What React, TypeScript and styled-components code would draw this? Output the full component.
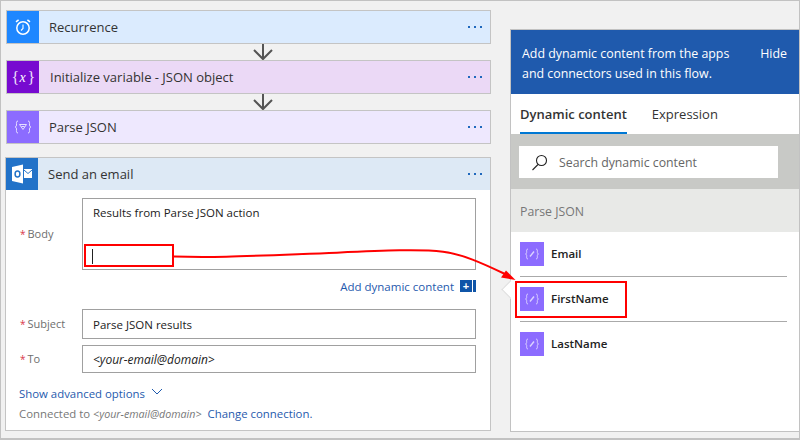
import styled, { createGlobalStyle } from 'styled-components'

const GlobalStyle = createGlobalStyle`
  html, body {
    margin: 0;
    padding: 0;
    background: #f1f1f1;
  }
  * {
    box-sizing: border-box;
  }
`

const fields = ['Email', 'FirstName', 'LastName']

export default function App() {
  return (
    <Page>
      <GlobalStyle />
      <Flow>
        <StepCard $bg="#dbebfe">
          <StepIcon $bg="#1e87ff">
            <ClockIcon />
          </StepIcon>
          <StepTitle>Recurrence</StepTitle>
          <MoreDots />
        </StepCard>
        <Connector>
          <DownArrow />
        </Connector>
        <StepCard $bg="#ebd9f6">
          <StepIcon $bg="#770bd0">
            <VarIcon />
          </StepIcon>
          <StepTitle $shift={1}>Initialize variable - JSON object</StepTitle>
          <MoreDots />
        </StepCard>
        <Connector>
          <DownArrow />
        </Connector>
        <StepCard $bg="#eee8fe">
          <StepIcon $bg="#8c6cff">
            <ParseIcon />
          </StepIcon>
          <StepTitle>Parse JSON</StepTitle>
          <MoreDots />
        </StepCard>
        <EmailCard>
          <EmailHeader>
            <StepIcon $bg="#2272c8">
              <OutlookIcon />
            </StepIcon>
            <StepTitle>Send an email</StepTitle>
            <MoreDots />
          </EmailHeader>
          <EmailBody>
            <FieldRow>
              <FieldLabel $top={28}>
                <Star>*</Star>Body
              </FieldLabel>
              <BodyBox>
                Results from Parse JSON action
                <Caret />
                <RedBox $left={1} $top={45} $width={90} $height={23} />
              </BodyBox>
            </FieldRow>
            <AddRow>
              <AddLink>Add dynamic content</AddLink>
              <PlusButton>+</PlusButton>
              <PlusBar />
            </AddRow>
            <FieldRow>
              <FieldLabel $top={7}>
                <Star>*</Star>Subject
              </FieldLabel>
              <InputBox $height={30}>Parse JSON results</InputBox>
            </FieldRow>
            <FieldRow $gap={6}>
              <FieldLabel $top={6}>
                <Star>*</Star>To
              </FieldLabel>
              <InputBox $height={28} $italic>
                {'<your-email@domain>'}
              </InputBox>
            </FieldRow>
            <AdvancedRow>
              Show advanced options
              <Chevron />
            </AdvancedRow>
            <ConnectedRow>
              Connected to <SmallItalic>{'<your-email@domain>'}</SmallItalic>
              <ChangeLink>Change connection.</ChangeLink>
            </ConnectedRow>
          </EmailBody>
        </EmailCard>
      </Flow>
      <Panel>
        <Notch />
        <PanelHeader>
          <HeaderText>
            Add dynamic content from the apps and connectors used in this flow.
          </HeaderText>
          <HideLink>Hide</HideLink>
        </PanelHeader>
        <Tabs>
          <Tab $active>Dynamic content</Tab>
          <Tab>Expression</Tab>
        </Tabs>
        <SearchBand>
          <SearchBox>
            <SearchIcon />
            Search dynamic content
          </SearchBox>
        </SearchBand>
        <GroupTitle>Parse JSON</GroupTitle>
        <FieldList>
          {fields.map((name) => (
            <FieldItem key={name}>
              <TokenIcon>
                <TokenGlyph />
              </TokenIcon>
              <FieldName>{name}</FieldName>
              {name === 'FirstName' && (
                <RedBox $left={-5} $top={4} $width={112} $height={37} />
              )}
            </FieldItem>
          ))}
        </FieldList>
      </Panel>
      <CalloutArrow />
    </Page>
  )
}

const MoreDots = () => (
  <Dots>
    <Dot />
    <Dot />
    <Dot />
  </Dots>
)

const DownArrow = () => (
  <svg width="22" height="17" viewBox="0 0 22 17" fill="none" stroke="#555" strokeWidth="2">
    <path d="M11 0v15M2 6l9 9 9-9" />
  </svg>
)

const ClockIcon = () => (
  <svg width="18" height="18" viewBox="0 0 18 18" fill="none" stroke="#fff">
    <circle cx="9" cy="10" r="6.200" strokeWidth="1.500" />
    <path d="M9 6.500V10.500L7 12.500" strokeWidth="1.100" />
    <path d="M2 3.800L4.600 1.800M16 3.800L13.400 1.800" strokeWidth="1.500" />
  </svg>
)

const VarIcon = () => (
  <svg width="26" height="24" viewBox="0 0 26 24">
    <text x="1.500" y="17.500" fill="#eee2fa" fontFamily="'Liberation Serif', serif" fontSize="16">
      {'{'}
    </text>
    <text x="9.500" y="16.500" fill="#fff" fontFamily="'Liberation Serif', serif" fontStyle="italic" fontSize="14">
      x
    </text>
    <text x="17.500" y="17.500" fill="#eee2fa" fontFamily="'Liberation Serif', serif" fontSize="16">
      {'}'}
    </text>
  </svg>
)

const ParseIcon = () => (
  <svg width="24" height="24" viewBox="0 0 24 24" fill="none" stroke="#e6dfff" strokeWidth="1">
    <path d="M7 6c-2 0-1.500 2-1.500 4 0 1.500-1 2-1.500 2 .5 0 1.500.5 1.500 2 0 2-.5 4 1.500 4" />
    <path d="M17 6c2 0 1.500 2 1.500 4 0 1.500 1 2 1.500 2-.5 0-1.500.5-1.500 2 0 2 .5 4-1.500 4" />
    <path d="M8.500 9.500h7l-3.500 5z" />
    <path d="M10.500 11.500h3" />
  </svg>
)

const OutlookIcon = () => (
  <svg width="22" height="22" viewBox="0 0 22 22">
    <path d="M1 4l11-2.500v19L1 18z" fill="#fff" />
    <ellipse cx="6.500" cy="11" rx="2.400" ry="3" fill="none" stroke="#2272c8" strokeWidth="1.500" />
    <path d="M13 6h8v9h-8z" fill="#fff" />
    <path d="M13 7l4 3.500L21 7" fill="none" stroke="#2272c8" strokeWidth="1" />
  </svg>
)

const TokenGlyph = () => (
  <svg width="24" height="24" viewBox="0 0 24 24" fill="none" stroke="#dcd3ff" strokeWidth="0.9">
    <path d="M8 7c-1.800 0-1.300 1.800-1.300 3.300 0 1.200-.7 1.700-1.200 1.700.5 0 1.200.5 1.200 1.700 0 1.500-.5 3.300 1.300 3.300" />
    <path d="M16 7c1.800 0 1.300 1.800 1.300 3.300 0 1.200.7 1.700 1.200 1.700-.5 0-1.200.5-1.200 1.700 0 1.500.5 3.300-1.300 3.300" />
    <path d="M10 14.500l4-5" strokeWidth="1.400" />
  </svg>
)

const SearchIcon = () => (
  <SearchSvg width="17" height="17" viewBox="0 0 17 17" fill="none" stroke="#222" strokeWidth="1.100">
    <circle cx="10.500" cy="6.500" r="5" />
    <path d="M7 10.500L1.500 16" />
  </SearchSvg>
)

const Chevron = () => (
  <ChevronSvg width="12" height="8" viewBox="0 0 12 8" fill="none" stroke="#1f5aad" strokeWidth="1">
    <path d="M1 1l5 5 5-5" />
  </ChevronSvg>
)

const CalloutArrow = () => (
  <ArrowOverlay width="800" height="440" viewBox="0 0 800 440" fill="none">
    <path
      d="M174 256.500C215 258 250 256 337 252.700C385 250.500 420 249 443 251.700C462 254 482 263 505 274"
      stroke="#f00"
      strokeWidth="2"
    />
    <path d="M515.500 280L501 277.500L506 270.500z" fill="#f00" />
  </ArrowOverlay>
)

const font = `'Open Sans', 'Liberation Sans', sans-serif`

const Page = styled.div`
  position: relative;
  display: flex;
  align-items: flex-start;
  width: 800px;
  height: 440px;
  overflow: hidden;
  background: #f1f1f1;
  border: 1px solid #c2c2c2;
  border-bottom-width: 2px;
  font-family: ${font};
  color: #333;
`

const Flow = styled.div`
  display: flex;
  flex-direction: column;
  flex: none;
  width: 486px;
  margin: 9px 0 0 4px;
`

const StepCard = styled.div<{ $bg: string }>`
  display: flex;
  align-items: center;
  height: 34px;
  margin-left: 1px;
  background: ${(p) => p.$bg};
  border: 1px solid #c4c4c4;
`

const StepIcon = styled.div<{ $bg: string }>`
  display: flex;
  align-items: center;
  justify-content: center;
  flex: none;
  width: 32px;
  height: 100%;
  background: ${(p) => p.$bg};
`

const StepTitle = styled.div<{ $shift?: number }>`
  flex: 1;
  padding-left: ${(p) => 10 + (p.$shift ?? 0)}px;
  font-size: 13px;
  color: #333;
`

const Dots = styled.div`
  display: flex;
  flex: none;
  gap: 4px;
  margin-right: 8px;
`

const Dot = styled.span`
  width: 2px;
  height: 2px;
  background: #1f68bd;
`

const Connector = styled.div`
  display: flex;
  justify-content: center;
  height: 16px;
  padding-left: 30px;
  overflow: visible;
`

const EmailCard = styled.div`
  display: flex;
  flex-direction: column;
  height: 274px;
  margin-top: 13px;
  background: #fff;
  border: 1px solid #c4c4c4;
`

const EmailHeader = styled.div`
  display: flex;
  align-items: center;
  flex: none;
  height: 32px;
  background: #dde9f5;
`

const EmailBody = styled.div`
  display: flex;
  flex-direction: column;
  padding: 8px 14px 0 12px;
`

const FieldRow = styled.div<{ $gap?: number }>`
  display: flex;
  margin-top: ${(p) => p.$gap ?? 0}px;
`

const FieldLabel = styled.div<{ $top: number }>`
  width: 64px;
  flex: none;
  padding-top: ${(p) => p.$top}px;
  padding-left: 2px;
  font-size: 11px;
  color: #6e6e6e;
`

const Star = styled.span`
  margin-right: 2px;
  font-size: 10px;
  color: #d9364a;
`

const BodyBox = styled.div`
  position: relative;
  flex: 1;
  height: 72px;
  padding: 6px 10px;
  border: 1px solid #a0a0a0;
  font-size: 11.500px;
  color: #222;
`

const Caret = styled.div`
  position: absolute;
  left: 9px;
  top: 50px;
  width: 1px;
  height: 15px;
  background: #222;
`

const RedBox = styled.div<{ $left: number; $top: number; $width: number; $height: number }>`
  position: absolute;
  left: ${(p) => p.$left}px;
  top: ${(p) => p.$top}px;
  width: ${(p) => p.$width}px;
  height: ${(p) => p.$height}px;
  border: 2px solid #f00;
`

const AddRow = styled.div`
  display: flex;
  align-items: center;
  justify-content: flex-end;
  height: 39px;
  padding-bottom: 7px;
`

const AddLink = styled.span`
  margin-right: 6px;
  font-size: 11.500px;
  color: #1f5aad;
`

const PlusButton = styled.span`
  display: flex;
  align-items: center;
  justify-content: center;
  width: 12px;
  height: 12px;
  background: #0f55a8;
  font-family: 'Liberation Sans', sans-serif;
  font-size: 11px;
  font-weight: 700;
  color: #fff;
`

const PlusBar = styled.span`
  width: 3px;
  height: 12px;
  margin-left: 1px;
  background: #0f55a8;
`

const InputBox = styled.div<{ $height: number; $italic?: boolean }>`
  display: flex;
  align-items: center;
  flex: 1;
  height: ${(p) => p.$height}px;
  padding-left: 10px;
  border: 1px solid #a0a0a0;
  font-size: ${(p) => (p.$italic ? 12 : 11.5)}px;
  font-style: ${(p) => (p.$italic ? 'italic' : 'normal')};
  color: #222;
`

const AdvancedRow = styled.div`
  display: flex;
  align-items: center;
  margin-top: 13px;
  padding-left: 1px;
  font-size: 11.400px;
  color: #1f5aad;
`

const ChevronSvg = styled.svg`
  margin-left: 6px;
  margin-top: -3px;
`

const ConnectedRow = styled.div`
  margin-top: 5px;
  padding-left: 1px;
  font-size: 11.400px;
  color: #777;
`

const SmallItalic = styled.span`
  font-size: 10.700px;
  font-style: italic;
`

const ChangeLink = styled.span`
  margin-left: 6px;
  color: #1f5aad;
`

const Panel = styled.div`
  position: relative;
  display: flex;
  flex-direction: column;
  flex: none;
  width: 290px;
  height: 403px;
  margin: 28px 0 0 19px;
  background: #fff;
  border: 1px solid #c2c2c2;
  border-right: none;
`

const Notch = styled.div`
  position: absolute;
  left: -7px;
  top: 253px;
  width: 13px;
  height: 13px;
  background: #fff;
  border-left: 1px solid #ddd;
  border-bottom: 1px solid #ddd;
  transform: rotate(45deg);
`

const PanelHeader = styled.div`
  display: flex;
  align-items: flex-start;
  justify-content: space-between;
  flex: none;
  height: 64px;
  padding: 14px 13px 0 11px;
  background: #1f5aad;
  color: #fff;
  font-size: 12.400px;
  line-height: 20px;
`

const HeaderText = styled.div`
  width: 225px;
`

const HideLink = styled.div`
  font-size: 12.400px;
`

const Tabs = styled.div`
  display: flex;
  flex: none;
  gap: 25px;
  height: 40px;
  padding-left: 9px;
`

const Tab = styled.div<{ $active?: boolean }>`
  padding-top: 11px;
  font-size: 13px;
  font-weight: ${(p) => (p.$active ? 600 : 400)};
  color: #333;
  border-bottom: 2px solid ${(p) => (p.$active ? '#0078d4' : 'transparent')};
`

const SearchBand = styled.div`
  flex: none;
  height: 55px;
  padding: 12px 22px 0 8px;
  background: #c8c9c6;
`

const SearchBox = styled.div`
  display: flex;
  align-items: center;
  height: 32px;
  padding-left: 12px;
  background: #fff;
  font-size: 12.300px;
  color: #666;
`

const SearchSvg = styled.svg`
  margin-right: 11px;
`

const GroupTitle = styled.div`
  flex: none;
  height: 43px;
  padding: 14px 0 0 9px;
  background: #e8e9e7;
  font-size: 12.300px;
  color: #777;
`

const FieldList = styled.div`
  display: flex;
  flex-direction: column;
  margin: 0 13px 0 9px;
`

const FieldItem = styled.div`
  position: relative;
  display: flex;
  align-items: flex-start;
  height: 45px;
  padding-top: 10px;
  border-bottom: 1px solid #aaa;

  &:last-child {
    border-bottom: none;
  }
`

const TokenIcon = styled.div`
  display: flex;
  align-items: center;
  justify-content: center;
  width: 24px;
  height: 24px;
  background: #8c6cff;
`

const FieldName = styled.div`
  margin-left: 7px;
  font-size: 11.500px;
  font-weight: 600;
  line-height: 24px;
  color: #222;
`

const ArrowOverlay = styled.svg`
  position: absolute;
  left: -1px;
  top: -1px;
  pointer-events: none;
`
